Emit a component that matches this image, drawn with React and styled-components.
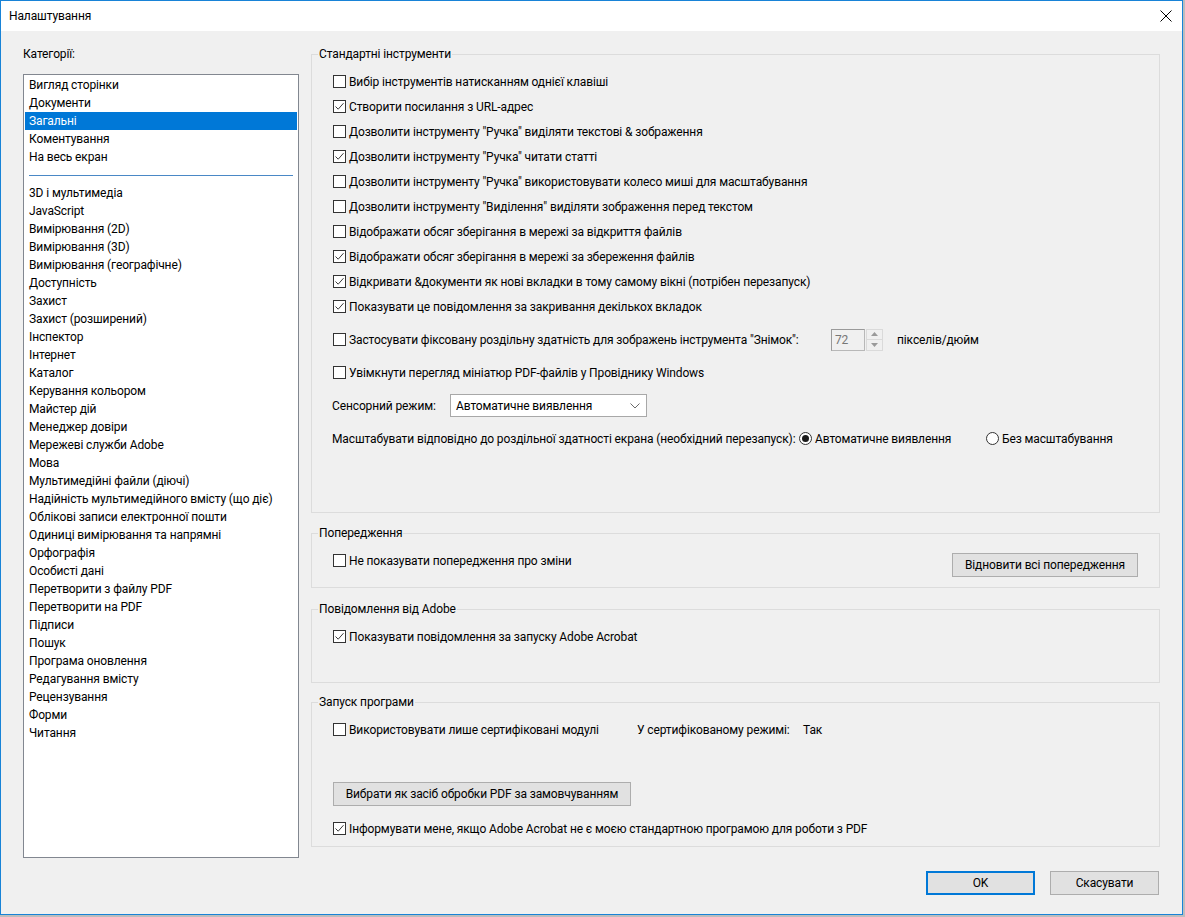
import React from 'react'
import styled, { createGlobalStyle } from 'styled-components'

const GlobalStyle = createGlobalStyle`
  html, body { margin: 0; padding: 0; background: #bdbdbd; }
  body { font-family: Roboto, "Noto Sans", sans-serif; font-size: 12px; letter-spacing: -0.12px; color: #000; }
  * { box-sizing: border-box; }
`

const categoriesTop = ['Вигляд сторінки', 'Документи', 'Загальні', 'Коментування', 'На весь екран']
const categoriesRest = [
  '3D і мультимедіа', 'JavaScript', 'Вимірювання (2D)', 'Вимірювання (3D)', 'Вимірювання (географічне)',
  'Доступність', 'Захист', 'Захист (розширений)', 'Інспектор', 'Інтернет', 'Каталог',
  'Керування кольором', 'Майстер дій', 'Менеджер довіри', 'Мережеві служби Adobe', 'Мова',
  'Мультимедійні файли (діючі)', 'Надійність мультимедійного вмісту (що діє)',
  'Облікові записи електронної пошти', 'Одиниці вимірювання та напрямні', 'Орфографія',
  'Особисті дані', 'Перетворити з файлу PDF', 'Перетворити на PDF', 'Підписи', 'Пошук',
  'Програма оновлення', 'Редагування вмісту', 'Рецензування', 'Форми', 'Читання'
]

const toolOptions = [
  ['Вибір інструментів натисканням однієї клавіші', false],
  ['Створити посилання з URL-адрес', true],
  ['Дозволити інструменту "Ручка" виділяти текстові & зображення', false],
  ['Дозволити інструменту "Ручка" читати статті', true],
  ['Дозволити інструменту "Ручка" використовувати колесо миші для масштабування', false],
  ['Дозволити інструменту "Виділення" виділяти зображення перед текстом', false],
  ['Відображати обсяг зберігання в мережі за відкриття файлів', false],
  ['Відображати обсяг зберігання в мережі за збереження файлів', true],
  ['Відкривати &документи як нові вкладки в тому самому вікні (потрібен перезапуск)', true],
  ['Показувати це повідомлення за закривання декількох вкладок', true],
]

const Check = ({ checked }) => (
  <Box>
    {checked && (
      <svg width="11" height="11" viewBox="0 0 11 11">
        <path d="M1.5 5.5 L4.2 8.2 L9.5 2.2" fill="none" stroke="#3a3a3a" strokeWidth="1" />
      </svg>
    )}
  </Box>
)

const CheckItem = ({ checked, children, h, mt, w }) => (
  <Row $h={h} $mt={mt}>
    <CheckLabel $w={w}>
      <Check checked={checked} />
      <span>{children}</span>
    </CheckLabel>
  </Row>
)

const Radio = ({ on, children, w }) => (
  <RadioLabel $w={w}>
    <RadioDot $on={on} />
    <span>{children}</span>
  </RadioLabel>
)

export default function App() {
  return (
    <>
      <GlobalStyle />
      <Window>
        <TitleBar>
          <Title>Налаштування</Title>
          <CloseBtn>
            <svg width="12" height="12" viewBox="0 0 12 12">
              <path d="M0.5 0.5 L11.5 11.5 M11.5 0.5 L0.5 11.5" stroke="#000" strokeWidth="1" />
            </svg>
          </CloseBtn>
        </TitleBar>
        <Body>
          <LeftCol>
            <CatLabel>Категорії:</CatLabel>
            <List>
              {categoriesTop.map((c) => (
                <Item key={c} $active={c === 'Загальні'}>{c}</Item>
              ))}
              <Separator />
              {categoriesRest.map((c) => (
                <Item key={c}>{c}</Item>
              ))}
            </List>
          </LeftCol>
          <RightCol>
            <Group>
              <Legend>Стандартні інструменти</Legend>
              <GroupInner $pt={7} $pb={57}>
                {toolOptions.map(([t, c]) => (
                  <CheckItem key={t} checked={c}>{t}</CheckItem>
                ))}
                <Row $h={33} $mt={4}>
                  <CheckLabel $w={498}>
                    <Check />
                    <span>Застосувати фіксовану роздільну здатність для зображень інструмента "Знімок":</span>
                  </CheckLabel>
                  <SpinInput>72</SpinInput>
                  <Spinner>
                    <SpinHalf>
                      <svg width="7" height="4" viewBox="0 0 7 4"><path d="M0 4 L3.5 0 L7 4Z" fill="#9a9a9a" /></svg>
                    </SpinHalf>
                    <SpinHalf>
                      <svg width="7" height="4" viewBox="0 0 7 4"><path d="M0 0 L3.5 4 L7 0Z" fill="#9a9a9a" /></svg>
                    </SpinHalf>
                  </Spinner>
                  <Text $ml={14}>пікселів/дюйм</Text>
                </Row>
                <CheckItem h={33}>Увімкнути перегляд мініатюр PDF-файлів у Провіднику Windows</CheckItem>
                <Row $h={33} $indent>
                  <Text $w={118}>Сенсорний режим:</Text>
                  <Select>
                    <span>Автоматичне виявлення</span>
                    <svg width="10" height="6" viewBox="0 0 10 6">
                      <path d="M0.5 0.5 L5 5 L9.5 0.5" fill="none" stroke="#6a6a6a" strokeWidth="1" />
                    </svg>
                  </Select>
                </Row>
                <Row $h={33} $indent>
                  <Text $w={467}>Масштабувати відповідно до роздільної здатності екрана (необхідний перезапуск):</Text>
                  <Radio on w={187}>Автоматичне виявлення</Radio>
                  <Radio>Без масштабування</Radio>
                </Row>
              </GroupInner>
            </Group>

            <Group $mt={12}>
              <Legend>Попередження</Legend>
              <GroupInner $pt={7} $pb={10}>
                <SplitRow>
                  <CheckItem>Не показувати попередження про зміни</CheckItem>
                  <Button $w={186} $mt={5}>Відновити всі попередження</Button>
                </SplitRow>
              </GroupInner>
            </Group>

            <Group $mt={13}>
              <Legend>Повідомлення від Adobe</Legend>
              <GroupInner $pt={7} $pb={33}>
                <CheckItem checked>Показувати повідомлення за запуску Adobe Acrobat</CheckItem>
              </GroupInner>
            </Group>

            <Group $mt={11}>
              <Legend>Запуск програми</Legend>
              <GroupInner $pt={7} $pb={5}>
                <Row>
                  <CheckLabel $w={304}>
                    <Check />
                    <span>Використовувати лише сертифіковані модулі</span>
                  </CheckLabel>
                  <Text $w={166}>У сертифікованому режимі:</Text>
                  <Text>Так</Text>
                </Row>
                <Button $w={298} $mt={40}>Вибрати як засіб обробки PDF за замовчуванням</Button>
                <CheckItem checked mt={10}>Інформувати мене, якщо Adobe Acrobat не є моєю стандартною програмою для роботи з PDF</CheckItem>
              </GroupInner>
            </Group>

            <Footer>
              <Button $w={109} $primary>OK</Button>
              <Button $w={109}>Скасувати</Button>
            </Footer>
          </RightCol>
        </Body>
      </Window>
    </>
  )
}

const Window = styled.div`
  width: 1183px;
  height: 915px;
  border: 1px solid #1883d7;
  background: #f0f0f0;
  display: flex;
  flex-direction: column;
  overflow: hidden;
`

const TitleBar = styled.div`
  height: 30px;
  flex-shrink: 0;
  background: #fff;
  display: flex;
  align-items: center;
  justify-content: space-between;
  padding: 0 9px 1px 8px;
`

const Title = styled.div`
  font-size: 12px;
  color: #000;
`

const CloseBtn = styled.div`
  width: 12px;
  height: 12px;
  margin-right: 1px;
  display: flex;
`

const Body = styled.div`
  display: flex;
  gap: 12px;
  padding: 15px 22px 0 22px;
`

const LeftCol = styled.div`
  width: 276px;
  flex-shrink: 0;
  display: flex;
  flex-direction: column;
`

const CatLabel = styled.div`
  line-height: 16px;
  margin-bottom: 12px;
`

const List = styled.div`
  height: 784px;
  background: #fff;
  border: 1px solid #828790;
  padding: 1px;
`

const Item = styled.div`
  height: 18px;
  line-height: 18px;
  padding-left: 4px;
  white-space: nowrap;
  background: ${(p) => (p.$active ? '#0078d7' : 'transparent')};
  color: ${(p) => (p.$active ? '#fff' : '#000')};
`

const Separator = styled.div`
  height: 18px;
  display: flex;
  align-items: center;
  padding: 0 4px 0 4px;
  &::after {
    content: '';
    flex: 1;
    height: 1px;
    background: #4a88c6;
  }
`

const RightCol = styled.div`
  width: 849px;
  flex-shrink: 0;
  display: flex;
  flex-direction: column;
`

const Group = styled.fieldset`
  margin: ${(p) => p.$mt || 0}px 0 0 0;
  padding: 0;
  border: 1px solid #dcdcdc;
  min-width: 0;
`

const Legend = styled.legend`
  margin-left: 6px;
  padding: 0 1px;
  line-height: 16px;
  height: 16px;
`

const GroupInner = styled.div`
  padding: ${(p) => p.$pt}px 21px ${(p) => p.$pb}px 21px;
  display: flex;
  flex-direction: column;
  align-items: flex-start;
`

const Row = styled.div`
  display: flex;
  align-items: center;
  height: ${(p) => p.$h || 25}px;
  margin-top: ${(p) => p.$mt || 0}px;
  margin-left: ${(p) => (p.$indent ? -1 : 0)}px;
  white-space: nowrap;
`

const SplitRow = styled.div`
  align-self: stretch;
  display: flex;
  justify-content: space-between;
  align-items: flex-start;
`

const CheckLabel = styled.label`
  display: flex;
  align-items: center;
  gap: 3px;
  width: ${(p) => (p.$w ? `${p.$w}px` : 'auto')};
  flex-shrink: 0;
`

const Box = styled.span`
  width: 13px;
  height: 13px;
  border: 1px solid #333;
  background: #fff;
  flex-shrink: 0;
  display: grid;
  place-items: center;
`

const Text = styled.span`
  width: ${(p) => (p.$w ? `${p.$w}px` : 'auto')};
  margin-left: ${(p) => p.$ml || 0}px;
  flex-shrink: 0;
`

const SpinInput = styled.div`
  width: 34px;
  height: 22px;
  border: 1px solid #b8b8b8;
  border-top-color: #9a9a9a;
  border-left-color: #9a9a9a;
  background: #f0f0f0;
  color: #777;
  padding: 2px 0 0 3px;
  line-height: 16px;
`

const Spinner = styled.div`
  width: 17px;
  height: 22px;
  margin-left: 1px;
  border: 1px solid #dadada;
  display: flex;
  flex-direction: column;
`

const SpinHalf = styled.div`
  flex: 1;
  display: grid;
  place-items: center;
  & + & { border-top: 1px solid #dadada; }
`

const Select = styled.div`
  width: 197px;
  height: 23px;
  border: 1px solid #a8a8a8;
  background: #fff;
  display: flex;
  align-items: center;
  justify-content: space-between;
  padding: 0 6px 0 5px;
`

const RadioLabel = styled.label`
  display: flex;
  align-items: center;
  gap: 3px;
  width: ${(p) => (p.$w ? `${p.$w}px` : 'auto')};
  flex-shrink: 0;
`

const RadioDot = styled.span`
  width: 13px;
  height: 13px;
  border-radius: 50%;
  border: 1px solid #333;
  background: #fff;
  display: grid;
  place-items: center;
  &::after {
    content: '';
    width: 7px;
    height: 7px;
    border-radius: 50%;
    background: ${(p) => (p.$on ? '#1a1a1a' : 'transparent')};
  }
`

const Button = styled.div`
  width: ${(p) => p.$w}px;
  height: 24px;
  margin-top: ${(p) => p.$mt || 0}px;
  background: #e1e1e1;
  border: ${(p) => (p.$primary ? '2px solid #0078d7' : '1px solid #adadad')};
  display: flex;
  align-items: center;
  justify-content: center;
  white-space: nowrap;
  flex-shrink: 0;
`

const Footer = styled.div`
  display: flex;
  justify-content: flex-end;
  gap: 15px;
  margin-top: 24px;
  padding-right: 1px;
`
